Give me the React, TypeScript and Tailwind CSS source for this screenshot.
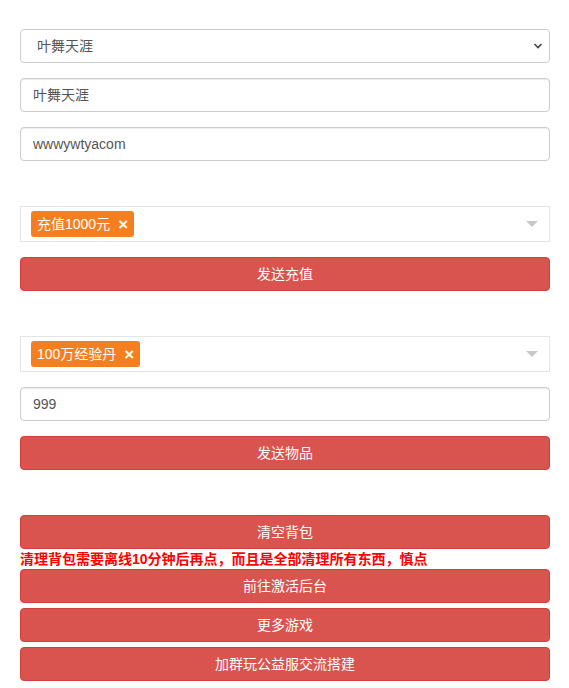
import React from "react";

const font = { fontFamily: '"Liberation Sans", "Noto Sans CJK SC", sans-serif' };

function Btn({ children, className = "" }: { children: React.ReactNode; className?: string }) {
  return (
    <div
      className={`h-[34px] rounded-[4px] border border-[#d43f3a] bg-[#d9534f] text-white text-[14px] flex items-center justify-center ${className}`}
    >
      {children}
    </div>
  );
}

function Input({ value, className = "" }: { value: string; className?: string }) {
  return (
    <div
      className={`h-[34px] rounded-[4px] border border-[#ccc] bg-white text-[#555] text-[14px] flex items-center pl-[12px] shadow-[inset_0_1px_1px_rgba(0,0,0,0.075)] ${className}`}
    >
      {value}
    </div>
  );
}

function Tags({ tag, className = "" }: { tag: string; className?: string }) {
  return (
    <div
      className={`h-[36px] border border-[#e5e5e5] bg-white flex items-center pl-[10px] pr-[11px] ${className}`}
    >
      <div className="h-[26px] rounded-[3px] bg-[#f57e1f] text-white text-[14px] flex items-center pl-[6px] pr-[6px]">
        <span>{tag}</span>
        <span className="ml-[8px] text-[17px] font-bold leading-none">×</span>
      </div>
      <div className="flex-1" />
      <div className="w-0 h-0 border-l-[6px] border-r-[6px] border-t-[6px] border-l-transparent border-r-transparent border-t-[#c8c8c8]" />
    </div>
  );
}

export default function App() {
  return (
    <div className="bg-white min-h-[688px] pl-[20px] pr-[19px] pt-[29px]" style={font}>
      <div className="h-[34px] rounded-[4px] border border-[#ccc] bg-white text-[#555] text-[14px] flex items-center pl-[16px] pr-[6px]">
        <span>叶舞天涯</span>
        <div className="flex-1" />
        <svg width="10" height="8" viewBox="0 0 10 8">
          <path d="M1.5 2 L5 5.5 L8.5 2" fill="none" stroke="#444" strokeWidth="1.6" />
        </svg>
      </div>
      <Input value="叶舞天涯" className="mt-[15px]" />
      <Input value="wwwywtyacom" className="mt-[15px]" />
      <Tags tag="充值1000元" className="mt-[45px]" />
      <Btn className="mt-[15px]">发送充值</Btn>
      <Tags tag="100万经验丹" className="mt-[45px]" />
      <Input value="999" className="mt-[15px]" />
      <Btn className="mt-[15px]">发送物品</Btn>
      <Btn className="mt-[45px]">清空背包</Btn>
      <div className="h-[20px] flex items-center text-[#ff0000] font-bold text-[14px] leading-none">
        清理背包需要离线10分钟后再点，而且是全部清理所有东西，慎点
      </div>
      <Btn>前往激活后台</Btn>
      <Btn className="mt-[5px]">更多游戏</Btn>
      <Btn className="mt-[5px]">加群玩公益服交流搭建</Btn>
    </div>
  );
}
